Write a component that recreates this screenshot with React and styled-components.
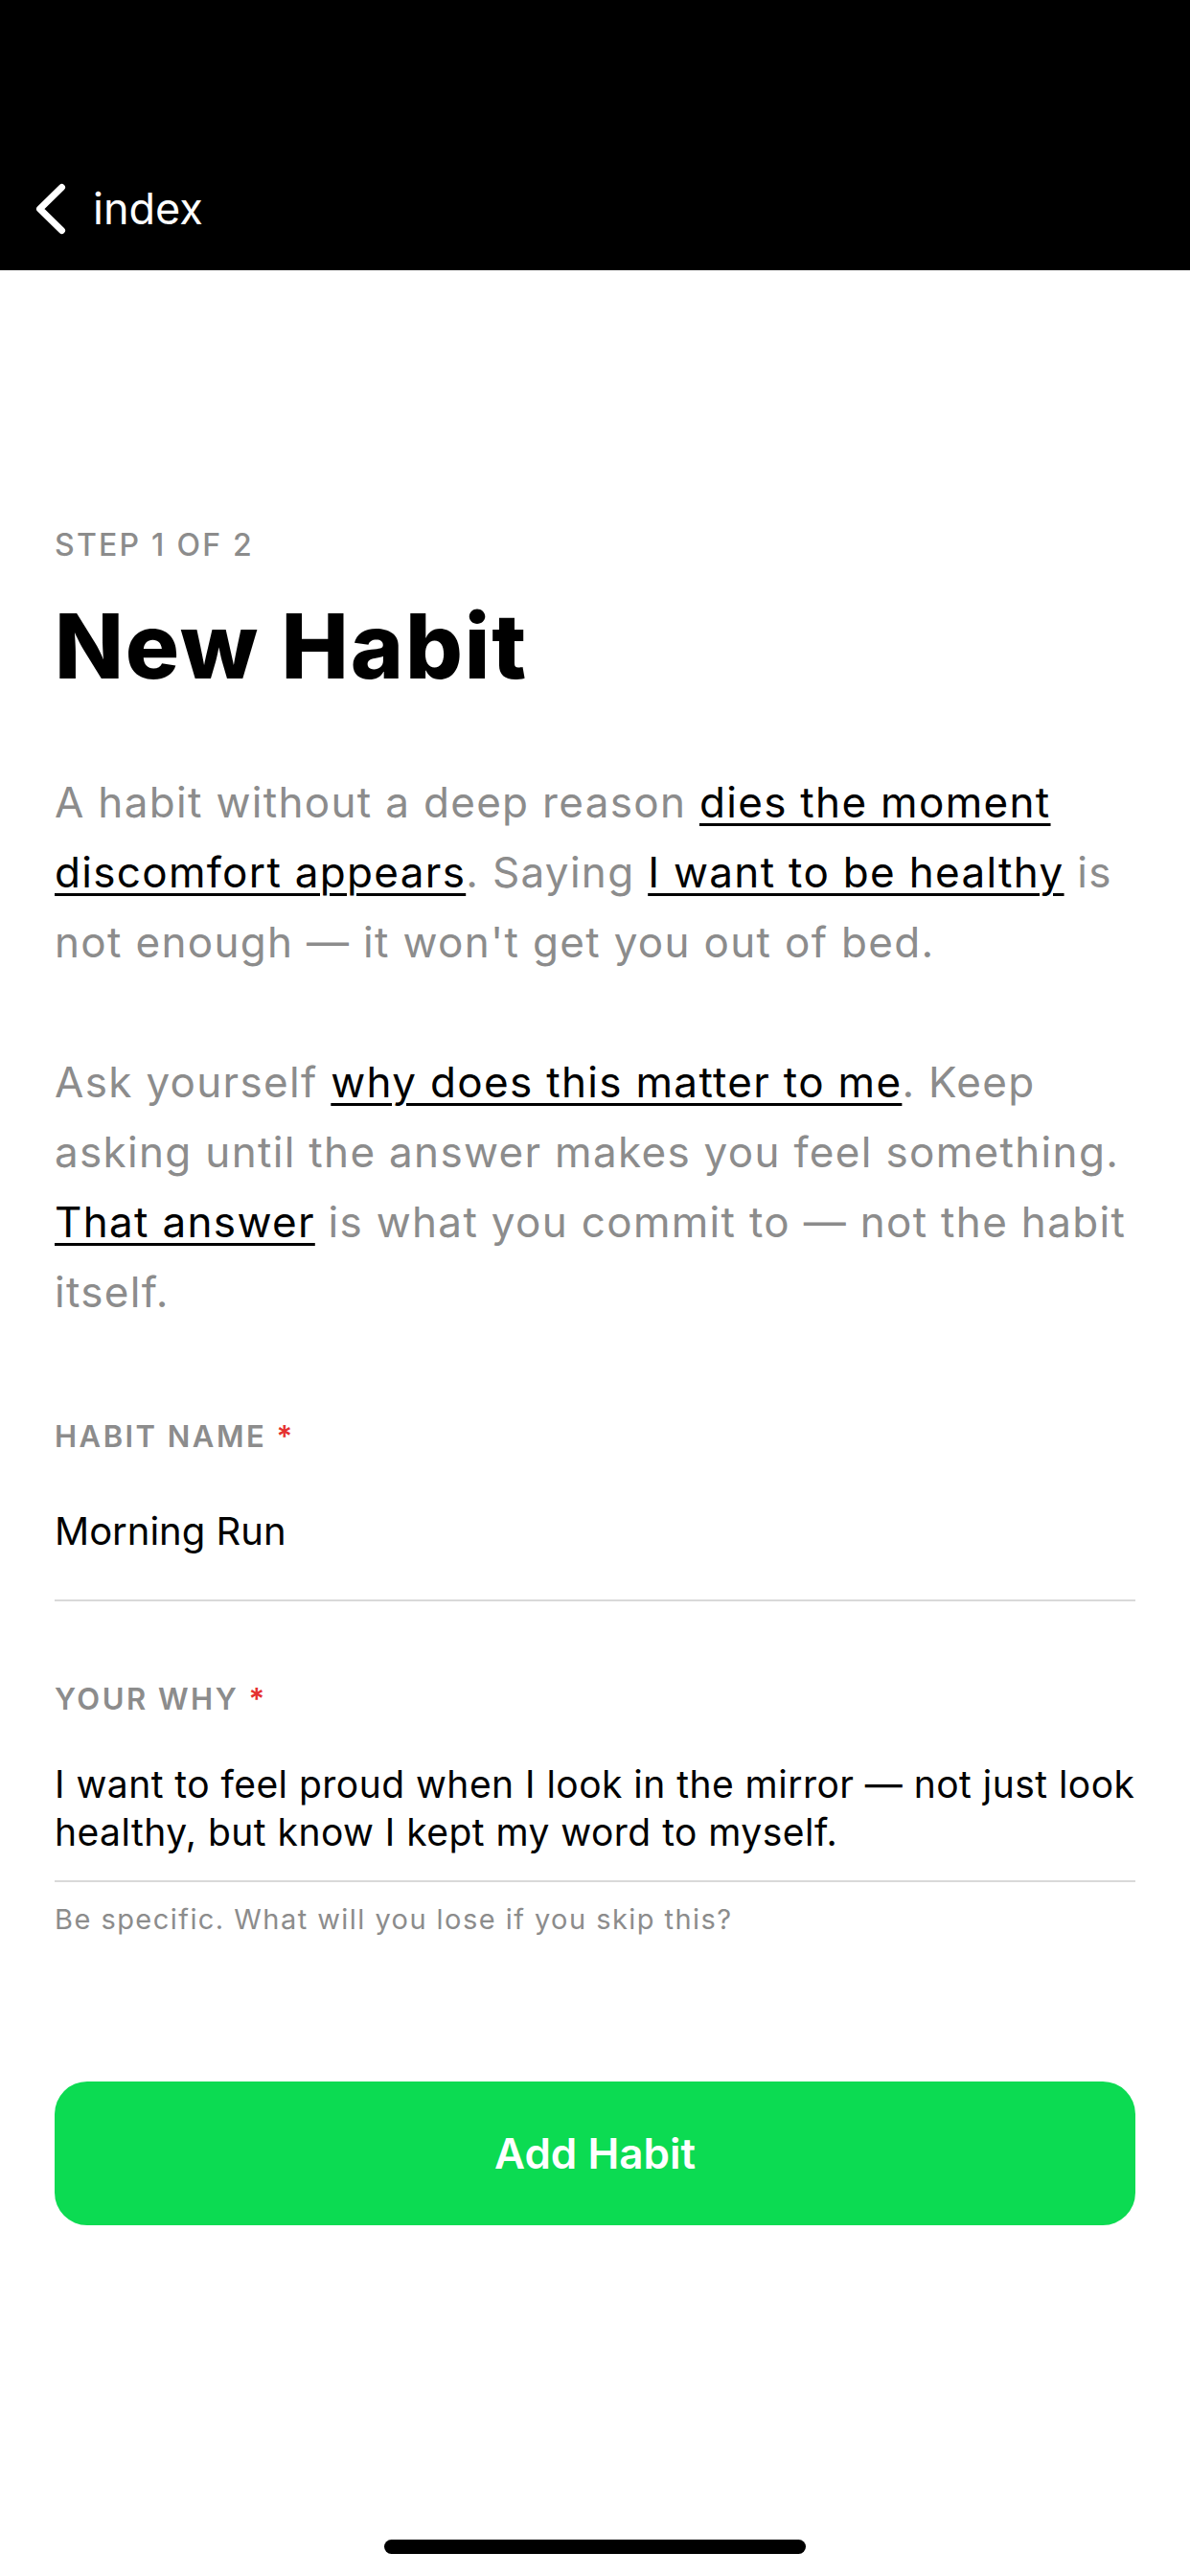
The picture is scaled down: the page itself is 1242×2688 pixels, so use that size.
import React from 'react';
import styled, { createGlobalStyle } from 'styled-components';

const GlobalStyle = createGlobalStyle`
  html, body {
    margin: 0;
    padding: 0;
    background: #ffffff;
  }
  body {
    font-family: Inter, "Noto Sans", sans-serif;
    -webkit-font-smoothing: antialiased;
  }
  * {
    box-sizing: border-box;
  }
`;

function App() {
    return (
        <>
            <GlobalStyle />
            <Screen>
                <Header>
                    <BackButton type="button">
                        <svg width="40" height="60" viewBox="0 0 40 60" fill="none">
                            <polyline points="30.5,7.5 7.5,30 30.5,52.5" stroke="#fff" strokeWidth="7" strokeLinecap="round" strokeLinejoin="round" />
                        </svg>
                        <BackLabel>index</BackLabel>
                    </BackButton>
                </Header>

                <Content>
                    <Eyebrow>Step 1 of 2</Eyebrow>
                    <Title>New Habit</Title>

                    <Intro>
                        A habit without a deep reason <Em>dies the moment discomfort appears</Em>. Saying <Em>I want to be healthy</Em> is not enough — it won't get you out of bed.
                    </Intro>
                    <Intro>
                        Ask yourself <Em>why does this matter to me</Em>. Keep asking until the answer makes you feel something. <Em>That answer</Em> is what you commit to — not the habit itself.
                    </Intro>

                    <Field $top={94}>
                        <Label>Habit name <Req>*</Req></Label>
                        <NameInput readOnly defaultValue="Morning Run" />
                    </Field>

                    <Field $top={82}>
                        <Label>Your why <Req>*</Req></Label>
                        <WhyInput
                            readOnly
                            rows={2}
                            defaultValue="I want to feel proud when I look in the mirror — not just look healthy, but know I kept my word to myself."
                        />
                    </Field>
                    <Hint>Be specific. What will you lose if you skip this?</Hint>

                    <AddButton type="button">Add Habit</AddButton>
                </Content>

                <HomeIndicator />
            </Screen>
        </>
    )
}

const Screen = styled.div`
position: relative;
min-height: 2688px;
background: #fff;
display: flex;
flex-direction: column;
`;

const Header = styled.header`
height: 282px;
background: #000;
display: flex;
align-items: flex-end;
padding: 0 0 34px 34px;
`;

const BackButton = styled.button`
display: flex;
align-items: center;
gap: 23px;
padding: 0;
border: none;
background: none;
color: #fff;
cursor: pointer;
`;

const BackLabel = styled.span`
font-family: Inter, sans-serif;
font-size: 45px;
line-height: 54px;
font-weight: 400;
letter-spacing: 0;
`;

const Content = styled.main`
display: flex;
flex-direction: column;
padding: 267px 57px 0 57px;
`;

const Eyebrow = styled.div`
font-size: 32px;
line-height: 40px;
font-weight: 500;
letter-spacing: 0.07em;
text-transform: uppercase;
color: #8c8c8c;
`;

const Title = styled.h1`
margin: 35px 0 0 0;
font-size: 94px;
line-height: 100px;
font-weight: 800;
letter-spacing: 0.02em;
color: #000;
`;

const Intro = styled.p`
margin: 77px 0 0 0;
font-size: 44px;
line-height: 73px;
font-weight: 400;
letter-spacing: 0.03em;
color: #8c8c8c;
& + & {
    margin-top: 73px;
}
`;

const Em = styled.span`
color: #000;
text-decoration: underline;
text-decoration-thickness: 3px;
text-underline-offset: 6px;
`;

const Field = styled.label`
display: flex;
flex-direction: column;
margin-top: ${p => p.$top}px;
border-bottom: 2px solid #d9d9d9;
`;

const Label = styled.span`
font-size: 31px;
line-height: 40px;
font-weight: 600;
letter-spacing: 0.08em;
text-transform: uppercase;
color: #8c8c8c;
`;

const Req = styled.span`
color: #e5312f;
`;

const NameInput = styled.input`
margin: 54px 0 46px 0;
padding: 0;
border: none;
outline: none;
background: transparent;
font-family: Inter, sans-serif;
font-size: 40px;
line-height: 50px;
height: 50px;
color: #000;
`;

const WhyInput = styled.textarea`
margin: 44px 0 25px 0;
padding: 0;
border: none;
outline: none;
resize: none;
overflow: hidden;
background: transparent;
font-family: Inter, sans-serif;
font-size: 39px;
line-height: 50px;
height: 100px;
letter-spacing: 0.012em;
color: #000;
`;

const Hint = styled.p`
margin: 21px 0 0 0;
font-size: 29px;
line-height: 36px;
letter-spacing: 0.05em;
color: #8c8c8c;
`;

const AddButton = styled.button`
margin-top: 151px;
height: 150px;
width: 100%;
border: none;
border-radius: 34px;
background: #0cdb52;
color: #fff;
font-family: Inter, sans-serif;
font-size: 44px;
font-weight: 600;
letter-spacing: 0;
cursor: pointer;
`;

const HomeIndicator = styled.div`
position: absolute;
left: 50%;
bottom: 23px;
width: 440px;
height: 15px;
margin-left: -220px;
border-radius: 8px;
background: #000;
`;

export default App;
